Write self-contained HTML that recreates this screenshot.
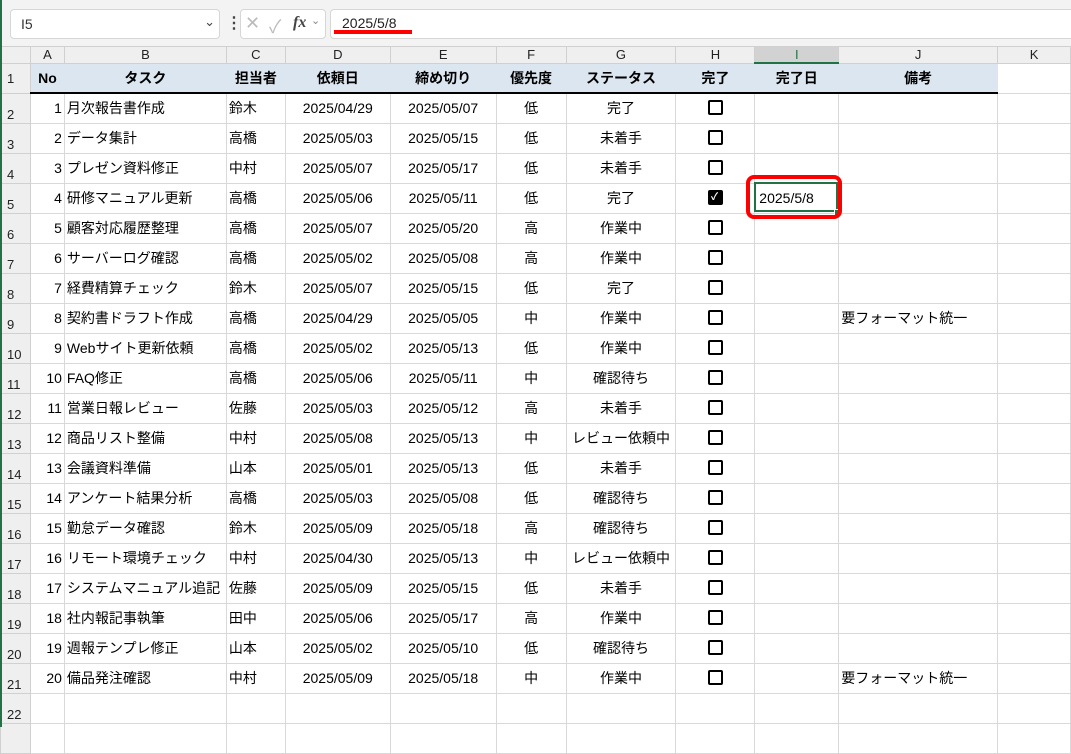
<!DOCTYPE html>
<html><head><meta charset="utf-8"><style>
body{margin:0;width:1071px;height:727px;overflow:hidden;background:#fff;font-family:"Liberation Sans","Noto Sans CJK JP",sans-serif;position:relative}
.top{position:absolute;left:0;top:0;width:1071px;height:46px;background:#f3f3f3}
.box{position:absolute;background:#fff;border:1px solid #d6d6d6;border-radius:4px}
.green{position:absolute;left:0;top:0;width:2px;height:727px;background:#217346;z-index:5}
table{position:absolute;left:0;top:46px;border-collapse:collapse;table-layout:fixed}
td{border:1px solid #d9d9d9;padding:0;font-size:14px;color:#000;white-space:nowrap;overflow:hidden;height:29px;line-height:29px}
tr.ch td{height:15px;line-height:15px;background:#efefef;text-align:center;font-size:13px;color:#222;border-color:#d0d0d0}
td.rh{background:#efefef;font-size:13px;color:#222;vertical-align:bottom;line-height:16px;padding-left:6px;border-color:#d0d0d0}
tr.hd td{height:28px;line-height:28px}
tr.hd td.d{background:#dce6f1;font-weight:bold;text-align:center;border-color:#dce6f1;border-bottom:2px solid #000}
.c{text-align:center}.r{text-align:right;padding-right:2px}.l{padding-left:2px}
.cb{display:inline-block;width:11px;height:11px;border:2px solid #000;border-radius:2px;vertical-align:middle;position:relative;top:-2px}
.cb.on{background:#000}
</style></head><body>
<div class="top"></div>
<div class="box" style="left:10px;top:9px;width:208px;height:28px"><span style="position:absolute;left:10px;top:6px;font-size:14px;color:#333">I5</span><span style="position:absolute;right:4px;top:4px;font-size:13px;color:#444">&#8964;</span></div>
<div style="position:absolute;left:226px;top:13px;font-size:16px;color:#444;font-weight:bold">&#8942;</div>
<div class="box" style="left:240px;top:9px;width:84px;height:28px"><span style="position:absolute;left:4px;top:3px;font-size:18px;color:#bbb">&#10005;</span><span style="position:absolute;left:28px;top:3px;font-size:18px;color:#bbb">&#10003;</span><span style="position:absolute;left:52px;top:4px;font-size:16px;font-style:italic;font-family:'Liberation Serif',serif;color:#444"><b>fx</b></span><span style="position:absolute;left:70px;top:4px;font-size:11px;color:#888">&#8964;</span></div>
<div class="box" style="left:330px;top:9px;width:750px;height:28px"><span style="position:absolute;left:11px;top:5px;font-size:14px;color:#222">2025/5/8</span></div>
<div style="position:absolute;left:334px;top:30px;width:78px;height:4px;background:#f00"></div>
<div class="green"></div>
<table>
<colgroup><col style="width:30px"><col style="width:34px"><col style="width:162px"><col style="width:59px"><col style="width:105px"><col style="width:106px"><col style="width:70px"><col style="width:110px"><col style="width:79px"><col style="width:84px"><col style="width:159px"><col style="width:73px"></colgroup>
<tr class="ch"><td></td><td>A</td><td>B</td><td>C</td><td>D</td><td>E</td><td>F</td><td>G</td><td>H</td><td style="background:#d2d2d2;border-bottom:2px solid #217346;color:#217346">I</td><td>J</td><td>K</td></tr>
<tr class="hd"><td class="rh">1</td><td class="d">No</td><td class="d">タスク</td><td class="d">担当者</td><td class="d">依頼日</td><td class="d">締め切り</td><td class="d">優先度</td><td class="d">ステータス</td><td class="d">完了</td><td class="d">完了日</td><td class="d">備考</td><td></td></tr>
<tr><td class="rh">2</td><td class="r">1</td><td class="l">月次報告書作成</td><td class="l">鈴木</td><td class="c">2025/04/29</td><td class="c">2025/05/07</td><td class="c">低</td><td class="c">完了</td><td class="c"><span class="cb"></span></td><td></td><td></td><td></td></tr>
<tr><td class="rh">3</td><td class="r">2</td><td class="l">データ集計</td><td class="l">高橋</td><td class="c">2025/05/03</td><td class="c">2025/05/15</td><td class="c">低</td><td class="c">未着手</td><td class="c"><span class="cb"></span></td><td></td><td></td><td></td></tr>
<tr><td class="rh">4</td><td class="r">3</td><td class="l">プレゼン資料修正</td><td class="l">中村</td><td class="c">2025/05/07</td><td class="c">2025/05/17</td><td class="c">低</td><td class="c">未着手</td><td class="c"><span class="cb"></span></td><td></td><td></td><td></td></tr>
<tr><td class="rh">5</td><td class="r">4</td><td class="l">研修マニュアル更新</td><td class="l">高橋</td><td class="c">2025/05/06</td><td class="c">2025/05/11</td><td class="c">低</td><td class="c">完了</td><td class="c"><span class="cb on"><span style="position:absolute;left:1px;top:-9px;color:#fff;font-size:10px;font-weight:bold">&#10003;</span></span></td><td class="l" style="padding-left:4px">2025/5/8</td><td></td><td></td></tr>
<tr><td class="rh">6</td><td class="r">5</td><td class="l">顧客対応履歴整理</td><td class="l">高橋</td><td class="c">2025/05/07</td><td class="c">2025/05/20</td><td class="c">高</td><td class="c">作業中</td><td class="c"><span class="cb"></span></td><td></td><td></td><td></td></tr>
<tr><td class="rh">7</td><td class="r">6</td><td class="l">サーバーログ確認</td><td class="l">高橋</td><td class="c">2025/05/02</td><td class="c">2025/05/08</td><td class="c">高</td><td class="c">作業中</td><td class="c"><span class="cb"></span></td><td></td><td></td><td></td></tr>
<tr><td class="rh">8</td><td class="r">7</td><td class="l">経費精算チェック</td><td class="l">鈴木</td><td class="c">2025/05/07</td><td class="c">2025/05/15</td><td class="c">低</td><td class="c">完了</td><td class="c"><span class="cb"></span></td><td></td><td></td><td></td></tr>
<tr><td class="rh">9</td><td class="r">8</td><td class="l">契約書ドラフト作成</td><td class="l">高橋</td><td class="c">2025/04/29</td><td class="c">2025/05/05</td><td class="c">中</td><td class="c">作業中</td><td class="c"><span class="cb"></span></td><td></td><td class="l">要フォーマット統一</td><td></td></tr>
<tr><td class="rh">10</td><td class="r">9</td><td class="l">Webサイト更新依頼</td><td class="l">高橋</td><td class="c">2025/05/02</td><td class="c">2025/05/13</td><td class="c">低</td><td class="c">作業中</td><td class="c"><span class="cb"></span></td><td></td><td></td><td></td></tr>
<tr><td class="rh">11</td><td class="r">10</td><td class="l">FAQ修正</td><td class="l">高橋</td><td class="c">2025/05/06</td><td class="c">2025/05/11</td><td class="c">中</td><td class="c">確認待ち</td><td class="c"><span class="cb"></span></td><td></td><td></td><td></td></tr>
<tr><td class="rh">12</td><td class="r">11</td><td class="l">営業日報レビュー</td><td class="l">佐藤</td><td class="c">2025/05/03</td><td class="c">2025/05/12</td><td class="c">高</td><td class="c">未着手</td><td class="c"><span class="cb"></span></td><td></td><td></td><td></td></tr>
<tr><td class="rh">13</td><td class="r">12</td><td class="l">商品リスト整備</td><td class="l">中村</td><td class="c">2025/05/08</td><td class="c">2025/05/13</td><td class="c">中</td><td class="c">レビュー依頼中</td><td class="c"><span class="cb"></span></td><td></td><td></td><td></td></tr>
<tr><td class="rh">14</td><td class="r">13</td><td class="l">会議資料準備</td><td class="l">山本</td><td class="c">2025/05/01</td><td class="c">2025/05/13</td><td class="c">低</td><td class="c">未着手</td><td class="c"><span class="cb"></span></td><td></td><td></td><td></td></tr>
<tr><td class="rh">15</td><td class="r">14</td><td class="l">アンケート結果分析</td><td class="l">高橋</td><td class="c">2025/05/03</td><td class="c">2025/05/08</td><td class="c">低</td><td class="c">確認待ち</td><td class="c"><span class="cb"></span></td><td></td><td></td><td></td></tr>
<tr><td class="rh">16</td><td class="r">15</td><td class="l">勤怠データ確認</td><td class="l">鈴木</td><td class="c">2025/05/09</td><td class="c">2025/05/18</td><td class="c">高</td><td class="c">確認待ち</td><td class="c"><span class="cb"></span></td><td></td><td></td><td></td></tr>
<tr><td class="rh">17</td><td class="r">16</td><td class="l">リモート環境チェック</td><td class="l">中村</td><td class="c">2025/04/30</td><td class="c">2025/05/13</td><td class="c">中</td><td class="c">レビュー依頼中</td><td class="c"><span class="cb"></span></td><td></td><td></td><td></td></tr>
<tr><td class="rh">18</td><td class="r">17</td><td class="l">システムマニュアル追記</td><td class="l">佐藤</td><td class="c">2025/05/09</td><td class="c">2025/05/15</td><td class="c">低</td><td class="c">未着手</td><td class="c"><span class="cb"></span></td><td></td><td></td><td></td></tr>
<tr><td class="rh">19</td><td class="r">18</td><td class="l">社内報記事執筆</td><td class="l">田中</td><td class="c">2025/05/06</td><td class="c">2025/05/17</td><td class="c">高</td><td class="c">作業中</td><td class="c"><span class="cb"></span></td><td></td><td></td><td></td></tr>
<tr><td class="rh">20</td><td class="r">19</td><td class="l">週報テンプレ修正</td><td class="l">山本</td><td class="c">2025/05/02</td><td class="c">2025/05/10</td><td class="c">低</td><td class="c">確認待ち</td><td class="c"><span class="cb"></span></td><td></td><td></td><td></td></tr>
<tr><td class="rh">21</td><td class="r">20</td><td class="l">備品発注確認</td><td class="l">中村</td><td class="c">2025/05/09</td><td class="c">2025/05/18</td><td class="c">中</td><td class="c">作業中</td><td class="c"><span class="cb"></span></td><td></td><td class="l">要フォーマット統一</td><td></td></tr>
<tr><td class="rh">22</td><td></td><td></td><td></td><td></td><td></td><td></td><td></td><td></td><td></td><td></td><td></td></tr>
<tr><td class="rh"></td><td></td><td></td><td></td><td></td><td></td><td></td><td></td><td></td><td></td><td></td><td></td></tr>
</table>
<div style="position:absolute;left:754px;top:182px;width:84px;height:30px;border:2px solid #217346;box-sizing:border-box"></div>
<div style="position:absolute;left:834px;top:209px;width:5px;height:5px;background:#217346;border:1px solid #fff"></div>
<div style="position:absolute;left:746px;top:175px;width:96px;height:44px;border:4px solid #f00;border-radius:8px;box-sizing:border-box"></div>
</body></html>
